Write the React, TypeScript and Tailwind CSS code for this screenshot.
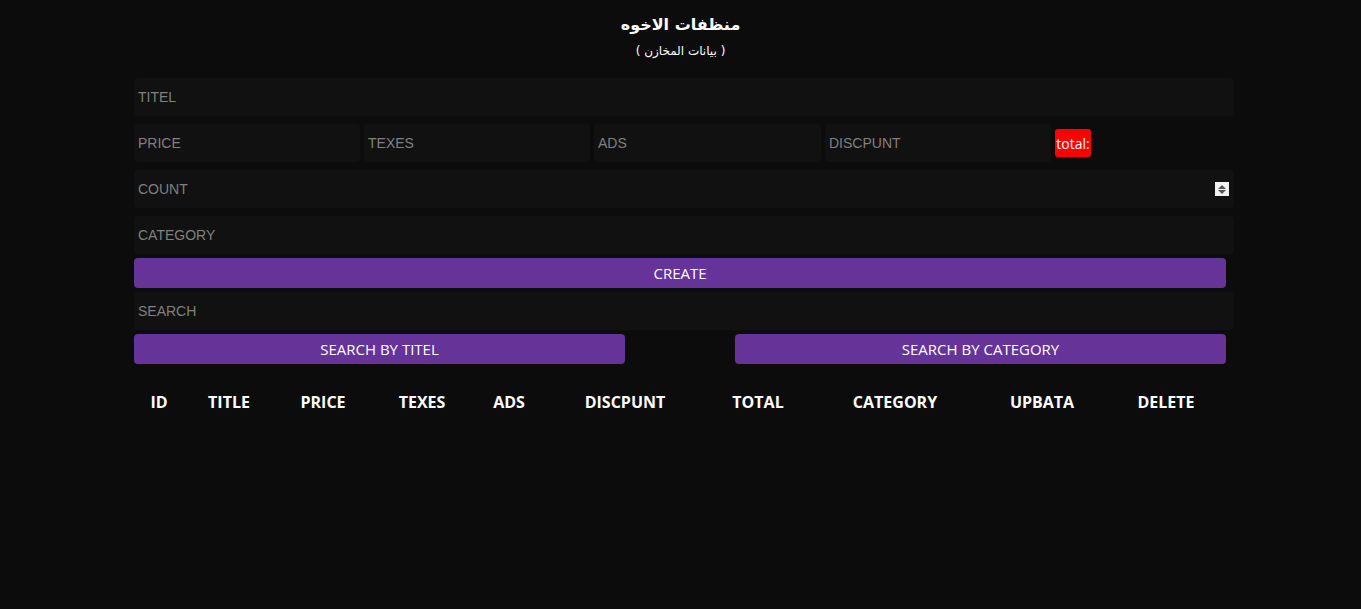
const inputCls =
  "h-[38px] rounded-[4px] bg-[#111111] px-1 text-[14px] text-[#808080] flex items-center font-['Liberation_Sans',Arial,sans-serif]";

const Field = ({ label, className = "" }: { label: string; className?: string }) => (
  <div className={`${inputCls} ${className}`}>{label}</div>
);

const headers = [
  "ID",
  "TITLE",
  "PRICE",
  "TEXES",
  "ADS",
  "DISCPUNT",
  "TOTAL",
  "CATEGORY",
  "UPBATA",
  "DELETE",
];

export default function App() {
  return (
    <div className="min-h-[609px] w-full bg-[#0c0c0c] text-white font-['Open_Sans',sans-serif]">
      <div className="flex flex-col items-center pt-[13px]">
        <h2 className="text-[16px] font-bold leading-[24px] font-['DejaVu_Sans','Noto_Sans',sans-serif]" dir="rtl">
          منظفات الاخوه
        </h2>
        <p className="mt-[6px] text-[12px] leading-[16px] font-['DejaVu_Sans','Noto_Sans',sans-serif]" dir="rtl">
          ( بيانات المخازن )
        </p>
      </div>

      <div className="ml-[134px] mt-[19px] w-[1100px]">
        <Field label="TITEL" />

        <div className="mt-[8px] flex items-center gap-[4px]">
          <Field label="PRICE" className="w-[226px]" />
          <Field label="TEXES" className="w-[226px]" />
          <Field label="ADS" className="w-[227px]" />
          <Field label="DISCPUNT" className="w-[226px]" />
          <span className="flex h-[28px] w-[36px] items-center justify-center rounded-[3px] bg-[#ff0000] text-[14px] text-white">
            total:
          </span>
        </div>

        <div className={`${inputCls} mt-[8px] justify-between pr-[5px]`}>
          <span>COUNT</span>
          <span className="flex h-[14px] w-[14px] flex-col items-center justify-center gap-[1px] bg-[#f0f0f0]">
            <svg width="8" height="4" viewBox="0 0 8 4">
              <path d="M0 4 L4 0 L8 4 Z" fill="#555" />
            </svg>
            <svg width="8" height="4" viewBox="0 0 8 4">
              <path d="M0 0 L4 4 L8 0 Z" fill="#555" />
            </svg>
          </span>
        </div>

        <Field label="CATEGORY" className="mt-[8px]" />

        <button className="mt-[4px] h-[30px] w-[1092px] rounded-[4px] bg-[#663399] text-[15px] text-white">
          CREATE
        </button>

        <Field label="SEARCH" className="mt-[4px]" />

        <div className="mt-[4px] flex w-[1092px] justify-between">
          <button className="h-[30px] w-[491px] rounded-[4px] bg-[#663399] text-[15px] text-white">
            SEARCH BY TITEL
          </button>
          <button className="h-[30px] w-[491px] rounded-[4px] bg-[#663399] text-[15px] text-white">
            SEARCH BY CATEGORY
          </button>
        </div>

        <div className="mt-[27px] grid w-[1092px] grid-cols-[50px_90px_98px_100px_74px_158px_108px_166px_128px_120px]">
          {headers.map((h) => (
            <div key={h} className="text-center text-[16px] font-bold leading-[22px]">
              {h}
            </div>
          ))}
        </div>
      </div>
    </div>
  );
}
